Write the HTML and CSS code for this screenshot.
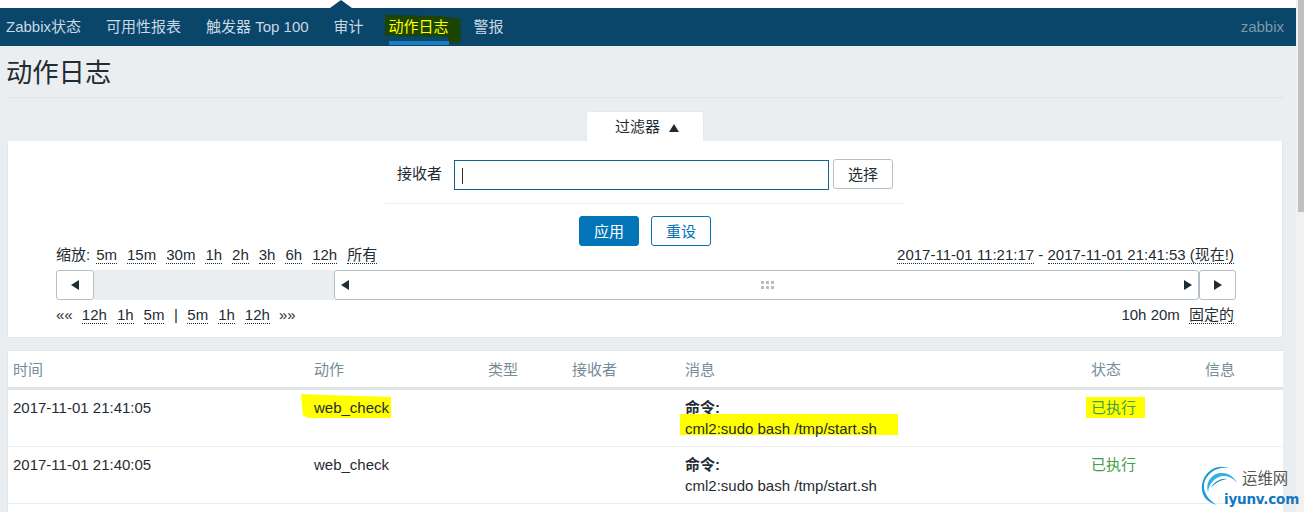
FILE: index.html
```html
<!DOCTYPE html>
<html lang="zh-CN">
<head>
<meta charset="utf-8">
<title>动作日志</title>
<link rel="stylesheet" href="styles.css">
</head>
<body>
<div class="page">
  <main class="app">
    <div class="topstrip"><span class="caret"></span></div>
    <nav class="nav">
      <ul class="menu">
        <li>Zabbix状态</li>
        <li>可用性报表</li>
        <li>触发器 Top 100</li>
        <li>审计</li>
        <li class="active"><span class="scrib"></span><span class="active-label">动作日志</span></li>
        <li>警报</li>
      </ul>
      <span class="server">zabbix</span>
    </nav>
    <div class="content">
      <h1 class="title">动作日志</h1>
      <div class="tabrow"><div class="tab">过滤器 <span class="tri-up"></span></div></div>
      <section class="panel">
        <div class="form-row">
          <label class="form-label">接收者</label>
          <div class="input"><span class="cursor"></span></div>
          <button class="btn-alt">选择</button>
        </div>
        <div class="form-sep"></div>
        <div class="actions">
          <button class="btn-primary">应用</button>
          <button class="btn-outline">重设</button>
        </div>
        <div class="time">
          <div class="time-row">
            <div class="links zoom">缩放:<a>5m</a><a>15m</a><a>30m</a><a>1h</a><a>2h</a><a>3h</a><a>6h</a><a>12h</a><a>所有</a></div>
            <div class="range"><a>2017-11-01 11:21:17</a> - <a>2017-11-01 21:41:53 (现在!)</a></div>
          </div>
          <div class="slider">
            <button class="arrow-btn"><span class="tri-left"></span></button>
            <div class="track"></div>
            <div class="handle">
              <span class="tri-left"></span>
              <span class="grip"><i></i><i></i><i></i><i></i><i></i><i></i></span>
              <span class="tri-right"></span>
            </div>
            <button class="arrow-btn end"><span class="tri-right"></span></button>
          </div>
          <div class="time-row lower">
            <div class="links">«« <a>12h</a><a>1h</a><a>5m</a><span class="pipe">|</span><a>5m</a><a>1h</a><a>12h</a><span class="arrows">»»</span></div>
            <div class="range">10h 20m <a class="fixed">固定的</a></div>
          </div>
        </div>
      </section>
      <section class="tablewrap">
        <table class="log">
          <colgroup><col class="c1"><col class="c2"><col class="c3"><col class="c4"><col class="c5"><col class="c6"><col class="c7"></colgroup>
          <thead>
            <tr><th>时间</th><th>动作</th><th>类型</th><th>接收者</th><th>消息</th><th>状态</th><th>信息</th></tr>
          </thead>
          <tbody>
            <tr>
              <td>2017-11-01 21:41:05</td>
              <td><span class="mark mark-action"></span><span class="over">web_check</span></td>
              <td></td><td></td>
              <td><b>命令:</b><br><span class="mark mark-msg"></span><span class="over">cml2:sudo bash /tmp/start.sh</span></td>
              <td class="ok"><span class="mark mark-state"></span><span class="over">已执行</span></td>
              <td></td>
            </tr>
            <tr>
              <td>2017-11-01 21:40:05</td>
              <td>web_check</td>
              <td></td><td></td>
              <td><b>命令:</b><br>cml2:sudo bash /tmp/start.sh</td>
              <td class="ok">已执行</td>
              <td></td>
            </tr>
          </tbody>
        </table>
      </section>
    </div>
  </main>
  <aside class="scrollbar"><div class="thumb"></div></aside>
</div>
<div class="watermark">
  <svg class="wm-logo" width="42" height="42" viewBox="0 0 42 42">
    <path d="M38 10 C32 2 20 -1 11 5 C1 12 -1 26 6 34 C9 37 13 39 17 40 C8 35 3 27 4 19 C6 8 18 1 28 3 C32 4 36 7 38 10 Z" fill="#1a9ad6"/>
    <path d="M37 18 C32 8 22 6 14 10 C8 14 6 21 8 27 C9 19 15 11 24 11 C29 11 34 14 37 18 Z" fill="#35b0e3"/>
    <path d="M27 14 C20 13 13 18 11 23 C15 18 20 15 27 14 Z" fill="#0f83c2"/>
  </svg>
  <span class="wm-cn">运维网</span>
  <span class="wm-en">iyunv.com</span>
</div>
</body>
</html>
```
FILE: styles.css
```css
* { box-sizing: border-box; }
html, body { margin: 0; padding: 0; height: 512px; overflow: hidden; }
body {
  background: #ebeef0;
  color: #1f2c33;
  font: 15px/17px "Liberation Sans", "Noto Sans CJK SC", sans-serif;
  position: relative;
}
.page { display: flex; height: 512px; overflow: hidden; }
.app { width: 1296px; flex: none; }
.scrollbar { flex: 1; background: #f1f1f1; padding-left: 2px; }
.thumb { height: 212px; background: #c1c1c1; }

.topstrip { height: 8px; background: #fff; position: relative; }
.caret {
  position: absolute; left: 330px; top: 0;
  border-left: 11px solid transparent; border-right: 11px solid transparent;
  border-bottom: 8px solid #0a466a;
}
.nav {
  height: 38px; background: #0a466a; display: flex;
  justify-content: space-between; align-items: flex-start;
  padding: 10px 12px 0 6px;
  color: #c9d9e4;
}
.menu { list-style: none; margin: 0; padding: 0; display: flex; gap: 25px; }
.menu li { white-space: nowrap; position: relative; }
.active { width: 60px; height: 27px; }
.active-label { position: relative; color: #ffff00; }
.active::after {
  content: ""; position: absolute; left: 0; right: 0; bottom: 0; height: 4px; background: #1a7ec2;
}
.scrib {
  position: absolute; left: -4px; top: -3px; width: 76px; height: 28px;
  background: #1c4402;
  clip-path: polygon(0 0, 72% 4%, 100% 14%, 100% 100%, 84% 100%, 84% 78%, 0 75%);
}
.server { color: #7d99a9; }

.content { padding: 0 13px 0 7px; }
.title {
  margin: 0 -1px 0 -1px; height: 52px; padding-top: 11px;
  font-size: 26.3px; line-height: 32px; font-weight: 400; color: #1f2c33;
  border-bottom: 1px solid #dfe4e7;
}
.tabrow { display: flex; justify-content: center; padding-top: 13px; height: 43px; }
.tab {
  width: 118px; height: 30px; background: #fff; border-radius: 3px 3px 0 0;
  text-align: center; padding: 6px 0 0 4px; color: #1f2c33;
  border: 1px solid #e4e8ea; border-bottom: 0;
}
.tri-up {
  display: inline-block; margin-left: 5px; vertical-align: 0;
  border-left: 5.5px solid transparent; border-right: 5.5px solid transparent;
  border-bottom: 8px solid #1f2c33;
}
.panel {
  background: #fff; height: 197px; border: 1px solid #e2e6e9; border-top: 0;
}
.form-row { display: flex; justify-content: center; align-items: flex-start; height: 62px; padding-top: 19px; }
.form-label { margin-right: 12px; padding-top: 5px; }
.input {
  width: 375px; height: 30px; border: 1px solid #0e6498; background: #fff; padding: 7px 0 0 7px;
}
.cursor { display: block; width: 1px; height: 16px; background: #1f2c33; }
.btn-alt {
  width: 60px; height: 30px; margin: -1px 0 0 4px; background: #fff;
  border: 1px solid #b4c0c7; border-radius: 3px; color: #1f2c33; font: inherit; padding: 0;
}
.form-sep { width: 520px; height: 1px; background: #ebeef0; margin: 0 auto; }
.actions { display: flex; justify-content: center; gap: 12px; padding-top: 12px; height: 43px; }
.btn-primary, .btn-outline {
  width: 60px; height: 30px; border-radius: 3px; font: inherit; padding: 0;
  border: 1px solid #0275b8;
}
.btn-primary { background: #0275b8; color: #fff; }
.btn-outline { background: #fff; color: #0275b8; }
.time { padding: 0 46px 0 48px; }
.time-row { display: flex; justify-content: space-between; height: 23px; padding-right: 2px; margin-top: -1px; margin-bottom: 1px; }
.time-row.lower { height: 26px; padding-top: 7px; }
.links a, .range a { border-bottom: 1px dotted #1f2c33; }
.links a { margin-left: 5px; margin-right: 5px; }
.links a:last-child { margin-right: 0; }
.zoom a:first-of-type { margin-left: 6px; }
.pipe { margin: 0 4.5px; }
.arrows { margin-left: 4px; }
.fixed { margin-left: 5px; }
.slider { display: flex; height: 30px; }
.arrow-btn {
  width: 38px; height: 30px; background: #fff; border: 1px solid #b4c0c7; border-radius: 3px;
  padding: 0; display: flex; align-items: center; justify-content: center; flex: none;
}
.arrow-btn.end { width: 37px; }
.track { width: 240px; background: #ebeef0; flex: none; }
.handle {
  flex: 1; background: #fff; border: 1px solid #b4c0c7; border-radius: 3px;
  display: flex; align-items: center; justify-content: space-between; padding: 0 6px;
}
.tri-left {
  display: block; border-top: 5px solid transparent; border-bottom: 5px solid transparent;
  border-right: 8px solid #1f2c33;
}
.tri-right {
  display: block; border-top: 5px solid transparent; border-bottom: 5px solid transparent;
  border-left: 8px solid #1f2c33;
}
.grip { display: grid; grid-template-columns: repeat(3, 2px); gap: 2px 3px; }
.grip i { display: block; width: 3px; height: 3px; background: #b4c0c7; }

.tablewrap {
  margin-top: 12px; background: #fff; border-top: 1px solid #e2e6e9; border-left: 1px solid #e2e6e9;
  height: 162px; overflow: hidden;
}
.log { border-collapse: separate; border-spacing: 0; width: 100%; table-layout: fixed; }
.c1 { width: 301px; } .c2 { width: 174px; } .c3 { width: 84px; } .c4 { width: 113px; }
.c5 { width: 406px; } .c6 { width: 114px; }
.log th {
  text-align: left; font-weight: 400; color: #768d99; height: 39px; padding: 0 5px;
  border-bottom: 3px solid #dfe4e7;
}
.log td {
  vertical-align: top; height: 57px; padding: 7px 5px 0; line-height: 21px;
  border-bottom: 1px solid #ebeef0; position: relative;
}
.log b { font-weight: 700; }
.over { position: relative; }
.ok { color: #429e47; }
.mark { position: absolute; background: #ffff00; }
.mark-action { left: -8px; top: 4px; width: 90px; height: 24px; clip-path: polygon(0 0, 30% 4%, 100% 12%, 100% 100%, 8% 100%, 2% 88%); }
.mark-msg { left: 0; top: 24px; width: 218px; height: 21px; }
.mark-state { left: 0; top: 7px; width: 59px; height: 21px; }

.watermark { position: absolute; left: 1200px; top: 465px; width: 104px; height: 47px; }
.wm-logo { position: absolute; left: 0; top: 0; }
.wm-cn { position: absolute; left: 42px; top: 5px; font-size: 15.4px; color: #555; }
.wm-en { position: absolute; left: 24px; top: 26px; font: 700 13.5px/17px "DejaVu Sans", sans-serif; color: #1277c0; letter-spacing: -0.2px; }
```
